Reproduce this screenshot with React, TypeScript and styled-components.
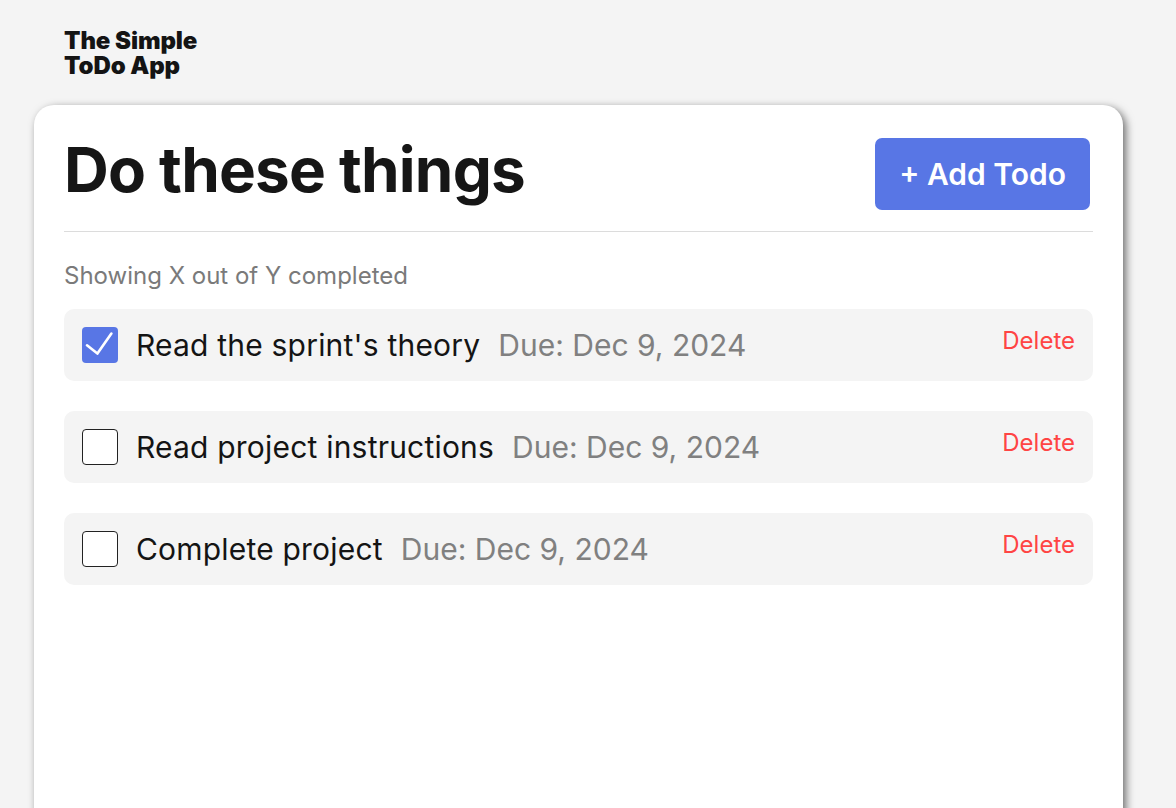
import React from "react";
import styled, { createGlobalStyle } from "styled-components";

const GlobalStyle = createGlobalStyle`
  html, body { margin: 0; padding: 0; background: #f4f4f4; }
  body { font-family: Inter, "Noto Sans", sans-serif; color: #161616; }
  * { box-sizing: border-box; }
`;

const Page = styled.div`
  min-height: 808px;
  padding: 28px 53px 0 34px;
  display: flex;
  flex-direction: column;
`;

const AppTitle = styled.h1`
  margin: 0 0 0 30px;
  font-size: 24px;
  line-height: 25px;
  font-weight: 900;
  letter-spacing: -0.1px;
  color: #141414;
  width: 175px;
`;

const Card = styled.main`
  margin-top: 27px;
  background: #fff;
  border-radius: 20px;
  min-height: 760px;
  padding: 28px 30px 30px;
  box-shadow: 3px 3px 8px rgba(0, 0, 0, 0.55);
`;

const CardHeader = styled.header`
  display: flex;
  justify-content: space-between;
  align-items: flex-start;
  padding-bottom: 21px;
  border-bottom: 1px solid #dcdcdc;
`;

const Title = styled.h2`
  margin: 0;
  font-size: 62px;
  line-height: 1.2;
  font-weight: 700;
  color: #161616;
  letter-spacing: -0.8px;
`;

const AddButton = styled.button`
  height: 72px;
  padding: 0 24px;
  background: #5876e5;
  color: #fff;
  border: none;
  border-radius: 7px;
  font-family: Inter, sans-serif;
  font-size: 30px;
  font-weight: 600;
  margin-top: 5px;
  margin-right: 3px;
`;

const Summary = styled.p`
  margin: 29px 0 19px;
  font-size: 24px;
  color: #7a7a7a;
`;

const List = styled.ul`
  list-style: none;
  margin: 0;
  padding: 0;
  display: flex;
  flex-direction: column;
  gap: 30px;
`;

const Row = styled.li`
  display: flex;
  align-items: center;
  gap: 19px;
  padding: 18px 18px;
  background: #f4f4f4;
  border-radius: 10px;
`;

const Box = styled.span<{ $checked: boolean }>`
  width: 36px;
  height: 36px;
  flex: none;
  border-radius: 4px;
  display: flex;
  align-items: center;
  justify-content: center;
  background: ${(p) => (p.$checked ? "#5876e5" : "#fff")};
  border: ${(p) => (p.$checked ? "none" : "1px solid #222")};
`;

const Label = styled.span`
  font-size: 30px;
  line-height: 36px;
  letter-spacing: 0.2px;
  color: #141414;
  margin-left: -1px;
`;

const Due = styled.span`
  font-size: 30px;
  line-height: 36px;
  color: #808080;
  flex: 1;
  margin-left: -1px;
`;

const DeleteButton = styled.button`
  align-self: flex-start;
  background: none;
  border: none;
  padding: 0;
  font-family: Inter, sans-serif;
  font-size: 24px;
  line-height: normal;
  margin-top: -1px;
  color: #ff4444;
`;

const todos = [
  { title: "Read the sprint's theory", due: "Dec 9, 2024", done: true },
  { title: "Read project instructions", due: "Dec 9, 2024", done: false },
  { title: "Complete project", due: "Dec 9, 2024", done: false },
];

export default function App() {
  return (
    <>
      <GlobalStyle />
      <Page>
        <AppTitle>The Simple ToDo App</AppTitle>
        <Card>
          <CardHeader>
            <Title>Do these things</Title>
            <AddButton>+ Add Todo</AddButton>
          </CardHeader>
          <Summary>Showing X out of Y completed</Summary>
          <List>
            {todos.map((t) => (
              <Row key={t.title}>
                <Box $checked={t.done}>
                  {t.done && (
                    <svg width="36" height="36" viewBox="0 0 36 36">
                      <polyline
                        points="5,18.3 15.4,26.6 29.4,6.6"
                        fill="none"
                        stroke="#fff"
                        strokeWidth="2.6"
                        strokeLinecap="round"
                        strokeLinejoin="round"
                      />
                    </svg>
                  )}
                </Box>
                <Label>{t.title}</Label>
                <Due>Due: {t.due}</Due>
                <DeleteButton>Delete</DeleteButton>
              </Row>
            ))}
          </List>
        </Card>
      </Page>
    </>
  );
}
